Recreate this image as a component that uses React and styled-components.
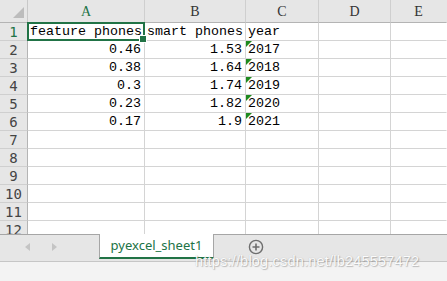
import React from "react";
import styled, { createGlobalStyle } from "styled-components";

const Global = createGlobalStyle`
  html, body { margin: 0; padding: 0; background: #fff; }
  body { width: 447px; height: 281px; overflow: hidden; }
  * { box-sizing: border-box; }
`;

const Root = styled.div`
  position: relative;
  width: 447px;
  height: 281px;
  display: flex;
  flex-direction: column;
  overflow: hidden;
  font-family: "Liberation Mono", "DejaVu Sans Mono", monospace;
`;

const Grid = styled.div`
  height: 234px;
  overflow: hidden;
  display: grid;
  grid-template-columns: 28px 117px 101px 73px 72px 1fr;
  grid-template-rows: 23px repeat(12, 18px);
  flex: none;
`;

const Corner = styled.div`
  position: relative;
  background: #e6e6e6;
  border-right: 1px solid #c8c8c8;
  border-bottom: 1px solid #b4b4b4;
  &::after {
    content: "";
    position: absolute;
    right: 3px;
    bottom: 4px;
    width: 0;
    height: 0;
    border-left: 11px solid transparent;
    border-bottom: 11px solid #bcbcbc;
  }
`;

const ColHead = styled.div`
  background: #e6e6e6;
  border-right: 1px solid ${(p) => (p.$last ? "transparent" : "#cfcfcf")};
  border-bottom: 1px solid #b4b4b4;
  display: flex;
  align-items: center;
  justify-content: center;
  padding-top: 2px;
  font-family: "Liberation Serif", "DejaVu Serif", serif;
  font-size: 14px;
  color: ${(p) => (p.$active ? "#217346" : "#333")};
`;

const RowHead = styled.div`
  background: #e6e6e6;
  border-right: 1px solid #b4b4b4;
  border-bottom: 1px solid #cfcfcf;
  display: flex;
  align-items: center;
  justify-content: center;
  font-family: "DejaVu Sans Mono", monospace;
  font-size: 14px;
  color: ${(p) => (p.$active ? "#217346" : "#444")};
`;

const Cell = styled.div`
  position: relative;
  border-right: 1px solid ${(p) => (p.$last ? "transparent" : "#d4d4d4")};
  border-bottom: 1px solid #d4d4d4;
  font-size: 13.33px;
  line-height: 17px;
  color: #000;
  white-space: nowrap;
  padding: 0 ${(p) => (p.$num ? "3px" : "2px")};
  text-align: ${(p) => (p.$num ? "right" : "left")};
  overflow: visible;
  z-index: ${(p) => (p.$selected ? 2 : 1)};
`;

const Selection = styled.div`
  position: absolute;
  left: -1px;
  top: -1px;
  right: -1px;
  bottom: -1px;
  border: 2px solid #217346;
  pointer-events: none;
  &::after {
    content: "";
    position: absolute;
    right: -4px;
    bottom: -4px;
    width: 6px;
    height: 6px;
    background: #217346;
    border: 1px solid #fff;
  }
`;

const TextMark = styled.div`
  position: absolute;
  left: 0;
  top: 0;
  width: 0;
  height: 0;
  border-top: 6px solid #1e8a1e;
  border-right: 6px solid transparent;
`;

const TabBar = styled.div`
  height: 28px;
  flex: none;
  background: #e6e6e6;
  border-top: 1px solid #a6a6a6;
  border-bottom: 1px solid #c6c6c6;
  display: flex;
  align-items: stretch;
`;

const NavArea = styled.div`
  width: 99px;
  display: flex;
  align-items: center;
  padding-left: 25px;
  gap: 22px;
  padding-bottom: 2px;
`;

const Arrow = styled.span`
  width: 0;
  height: 0;
  border-top: 4px solid transparent;
  border-bottom: 4px solid transparent;
  ${(p) =>
    p.$dir === "left"
      ? "border-right: 5px solid #c4c4c4;"
      : "border-left: 5px solid #c4c4c4;"}
`;

const Tab = styled.div`
  margin-top: -1px;
  height: 25px;
  width: 115px;
  background: #fff;
  border-left: 1px solid #a6a6a6;
  border-right: 1px solid #a6a6a6;
  border-bottom: 2px solid #217346;
  display: flex;
  align-items: center;
  justify-content: center;
  font-family: "Noto Sans", "Liberation Sans", sans-serif;
  font-size: 13px;
  color: #217346;
  padding-bottom: 1px;
`;

const AddButton = styled.div`
  width: 84px;
  display: flex;
  align-items: center;
  justify-content: center;
  padding-bottom: 3px;
`;

const StatusBar = styled.div`
  flex: 1;
  background: #f3f3f3;
`;

const Watermark = styled.div`
  position: absolute;
  left: 195px;
  top: 253px;
  font-family: "Liberation Sans", Arial, sans-serif;
  font-size: 14.5px;
  color: rgba(255, 255, 255, 0.95);
  text-shadow: 1px 1px 1px rgba(90, 90, 90, 0.35), 0 0 1px rgba(90, 90, 90, 0.3);
  letter-spacing: 0.2px;
  pointer-events: none;
  white-space: nowrap;
`;

const cols = ["A", "B", "C", "D", "E"];
const data = [
  ["feature phones", "smart phones", "year"],
  ["0.46", "1.53", "2017"],
  ["0.38", "1.64", "2018"],
  ["0.3", "1.74", "2019"],
  ["0.23", "1.82", "2020"],
  ["0.17", "1.9", "2021"],
];

export default function App() {
  const rows = [];
  for (let r = 0; r < 12; r++) {
    const rowData = data[r] || [];
    rows.push(
      <RowHead key={`h${r}`} $active={r === 0}>
        {r + 1}
      </RowHead>
    );
    for (let c = 0; c < 5; c++) {
      const v = rowData[c] || "";
      const isNum = r > 0 && c < 2 && v !== "";
      const textNum = r > 0 && c === 2 && v !== "";
      const selected = r === 0 && c === 0;
      rows.push(
        <Cell key={`${r}-${c}`} $num={isNum} $selected={selected} $last={c === 4}>
          {textNum && <TextMark />}
          {v}
          {selected && <Selection />}
        </Cell>
      );
    }
  }
  return (
    <Root>
      <Global />
      <Grid>
        <Corner />
        {cols.map((c, i) => (
          <ColHead key={c} $active={i === 0} $last={i === 4}>
            {c}
          </ColHead>
        ))}
        {rows}
      </Grid>
      <TabBar>
        <NavArea>
          <Arrow $dir="left" />
          <Arrow $dir="right" />
        </NavArea>
        <Tab>pyexcel_sheet1</Tab>
        <AddButton>
          <svg width="16" height="16" viewBox="0 0 16 16">
            <circle cx="8" cy="8" r="6.6" fill="none" stroke="#6e6e6e" strokeWidth="1.4" />
            <path d="M8 4.5v7M4.5 8h7" stroke="#6e6e6e" strokeWidth="1.6" />
          </svg>
        </AddButton>
      </TabBar>
      <StatusBar />
      <Watermark>https://blog.csdn.net/lb245557472</Watermark>
    </Root>
  );
}
